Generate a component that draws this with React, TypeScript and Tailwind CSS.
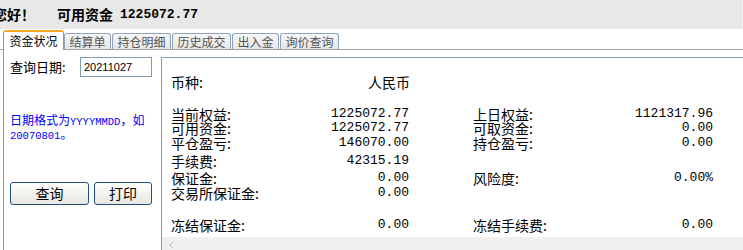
import { ChevronLeft } from 'lucide-react';

const cjk = "font-['Noto_Sans_CJK_SC',sans-serif]";
const mono = "font-['Liberation_Mono','Noto_Sans_CJK_SC',monospace]";

type Cell = { label: string; value: string } | null;

type Row = { left: Cell; right: Cell; h: string };

const rows: Row[] = [
  { left: { label: '币种:', value: '人民币' }, right: null, h: 'h-[32px]' },
  { left: { label: '当前权益:', value: '1225072.77' }, right: { label: '上日权益:', value: '1121317.96' }, h: 'h-[14px]' },
  { left: { label: '可用资金:', value: '1225072.77' }, right: { label: '可取资金:', value: '0.00' }, h: 'h-[15px]' },
  { left: { label: '平仓盈亏:', value: '146070.00' }, right: { label: '持仓盈亏:', value: '0.00' }, h: 'h-[18px]' },
  { left: { label: '手续费:', value: '42315.19' }, right: null, h: 'h-[17px]' },
  { left: { label: '保证金:', value: '0.00' }, right: { label: '风险度:', value: '0.00%' }, h: 'h-[15px]' },
  { left: { label: '交易所保证金:', value: '0.00' }, right: null, h: 'h-[32px]' },
  { left: { label: '冻结保证金:', value: '0.00' }, right: { label: '冻结手续费:', value: '0.00' }, h: 'h-[15px]' },
];

function Field({ cell, width }: { cell: Cell; width: string }) {
  return (
    <div className={`${width} flex justify-between items-start`}>
      {cell && (
        <>
          <span className={`block h-[14px] leading-[14px] ${cjk} text-[14px] text-black`}>{cell.label}</span>
          {cell.value === '人民币' ? (
            <span className={`block h-[14px] leading-[14px] ${cjk} text-[14px] text-black -mr-px`}>{cell.value}</span>
          ) : (
            <span className={`block h-[14px] leading-[14px] ${mono} text-[13px] text-black`}>{cell.value}</span>
          )}
        </>
      )}
    </div>
  );
}

const tabs = ['结算单', '持仓明细', '历史成交', '出入金', '询价查询'];
const tabWidths = ['w-[47px]', 'w-[59px]', 'w-[59px]', 'w-[47px]', 'w-[59px]'];

export default function App() {
  return (
    <div className="w-[743px] h-[250px] bg-white overflow-hidden flex flex-col">
      {/* top status bar */}
      <div className="h-[29px] shrink-0 bg-[#e8e8e8] flex items-center font-bold text-black whitespace-nowrap border-r border-[#f4f4f4]">
        <span className={`${cjk} text-[14px] ml-[-7px]`}>您好！</span>
        <span className={`${cjk} text-[14px] ml-[22px]`}>可用资金</span>
        <span className={`${mono} text-[13px] ml-[7px]`}>1225072.77</span>
      </div>

      {/* tab strip */}
      <div className="h-[21px] shrink-0 flex items-end pl-[3px] border-b border-[#a0a4a8]">
        <div className={`w-[61px] h-[20px] -mb-px bg-white border-t-2 border-t-[#f5a623] border-x border-[#7f9db9] rounded-t-[3px] flex items-center justify-center ${cjk} text-[12px] text-black`}>
          资金状况
        </div>
        {tabs.map((t, i) => (
          <div
            key={t}
            className={`${tabWidths[i]} ${i > 0 ? 'ml-px' : ''} h-[16px] bg-gradient-to-b from-[#f7f7f7] to-[#e6e6e6] border border-b-0 border-[#8ea4bc] rounded-t-[3px] flex items-center justify-center ${cjk} text-[12px] text-[#555] leading-none`}
          >
            {t}
          </div>
        ))}
      </div>

      {/* body */}
      <div className="flex-1 flex">
        {/* left query form */}
        <div className="ml-[3px] w-[158px] shrink-0 border-l border-[#7f9db9] pt-[7px] pl-[6px] flex flex-col">
          <div className="flex items-center h-[20px]">
            <span className={`${cjk} text-[13px] text-black w-[70px]`}>查询日期:</span>
            <div className="w-[72px] h-[20px] border border-[#7f9db9] flex items-center pl-[3px] font-['Liberation_Sans',sans-serif] text-[11px] text-black">
              20211027
            </div>
          </div>
          <div className={`mt-[37px] ${cjk} text-[12px] leading-[12px] text-[#0000ff] whitespace-nowrap`}>
            日期格式为<span className={`${mono} text-[10.5px]`}>YYYYMMDD</span>，如
            <br />
            <span className={`${mono} text-[10.5px]`}>20070801</span>。
          </div>
          <div className="mt-[40px] flex gap-[5px]">
            <button className={`w-[79px] h-[23px] rounded-[3px] border border-[#1f4f7f] bg-gradient-to-b from-white to-[#e8e6de] ${cjk} text-[14px] text-black flex items-center justify-center`}>
              查询
            </button>
            <button className={`w-[58px] h-[23px] rounded-[3px] border border-[#1f4f7f] bg-gradient-to-b from-white to-[#e8e6de] ${cjk} text-[14px] text-black flex items-center justify-center`}>
              打印
            </button>
          </div>
        </div>

        {/* fund detail panel */}
        <div className="flex-1 mt-[7px] border-l border-t border-[#7f9db9] flex flex-col min-w-0">
          <div className="flex-1 pt-[17px] pl-[9px] overflow-hidden">
            {rows.map((r, i) => (
              <div key={i} className={`${r.h} flex`}>
                <Field cell={r.left} width="w-[238px]" />
                <div className="w-[64px]" />
                <Field cell={r.right} width="w-[240px]" />
              </div>
            ))}
          </div>
          <div className="h-[13px] shrink-0 bg-[#f0f0f0] flex items-start pl-[4px] pt-[3px]">
            <ChevronLeft size={10} strokeWidth={2} className="text-[#a8a8a8]" />
          </div>
        </div>
      </div>
    </div>
  );
}
